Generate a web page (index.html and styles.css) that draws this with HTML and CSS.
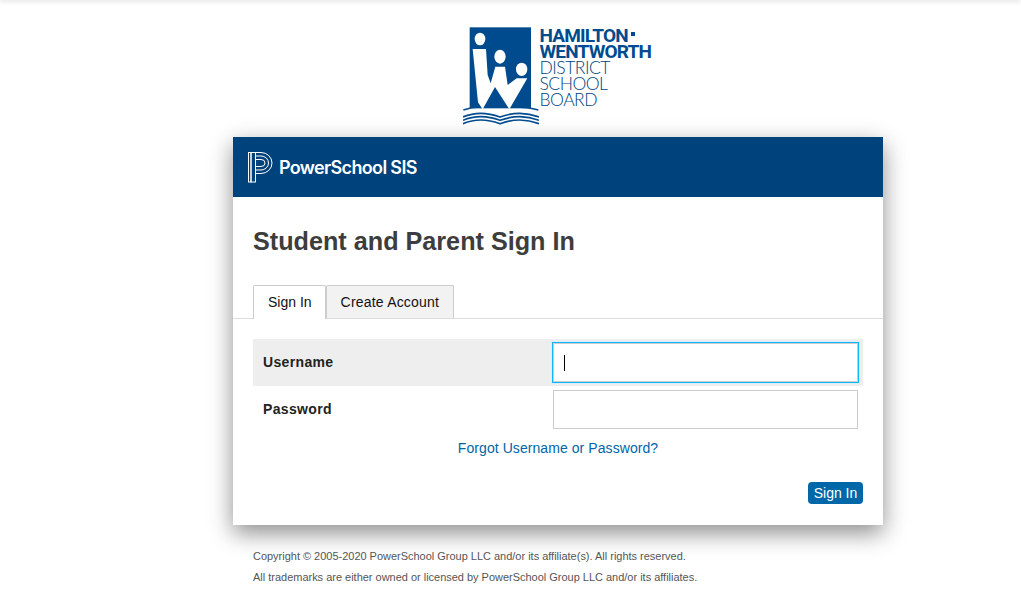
FILE: index.html
```html
<!DOCTYPE html>
<html lang="en">
<head>
    <meta charset="UTF-8">
    <meta name="viewport" content="width=device-width, initial-scale=1.0">
    <title>Student and Parent Sign In</title>
    <link rel="stylesheet" href="styles.css">
</head>
<body>
    <div class="top-edge"></div>

    <div class="page">
        <div class="board-logo">
            <svg class="board-mark" width="76" height="100" viewBox="39 36 228 300">
                <rect x="59" y="37" width="184" height="243" fill="#004b8d"/>
                <ellipse cx="90" cy="72" rx="16" ry="19" fill="#fff"/>
                <ellipse cx="150" cy="125" rx="17" ry="21" fill="#fff"/>
                <ellipse cx="215" cy="163" rx="17" ry="20" fill="#fff"/>
                <path d="M68 102 H108 L113 180 L122 205 L136 155 H165 L173 210 L200 190 H232 L178 283 L135 216 L98 283 L84 262 Z" fill="#fff"/>
                <g fill="none" stroke="#004b8d">
                    <path stroke-width="4" d="M40 285 Q65 276 90 276"/>
                    <path stroke-width="4" d="M190 276 Q235 276 265 285"/>
                    <path stroke-width="5" d="M39 306 Q90 284 150 306 Q210 284 267 306"/>
                    <path stroke-width="5" d="M39 316 Q90 294 150 316 Q210 294 267 316"/>
                    <path stroke-width="5" d="M39 326 Q90 304 150 326 Q210 304 267 326"/>
                </g>
            </svg>
            <div class="board-name">
                <div class="board-strong">HAMILTON<span class="board-dot"></span></div>
                <div class="board-strong">WENTWORTH</div>
                <div class="board-light">DISTRICT</div>
                <div class="board-light">SCHOOL</div>
                <div class="board-light">BOARD</div>
            </div>
        </div>

        <div class="card">
            <div class="card-header">
                <svg class="ps-mark" width="25" height="31" viewBox="0 0 25 31" fill="none" stroke="#fff" stroke-width="1">
                    <rect x="0.5" y="0.5" width="2.5" height="29.5"/>
                    <rect x="3" y="0.5" width="4.5" height="29.5"/>
                    <path d="M7.5 0.5 H13 A11 10.5 0 0 1 13 21.5 H7.5"/>
                    <path d="M7.5 4 H13 A7.5 7 0 0 1 13 18 H7.5"/>
                    <path d="M7.5 7.5 H13 A4 3.5 0 0 1 13 14.5 H7.5"/>
                </svg>
                <span class="ps-name">PowerSchool SIS</span>
            </div>

            <h1>Student and Parent Sign In</h1>

            <div class="tabs">
                <a class="tab tab-active">Sign In</a>
                <a class="tab">Create Account</a>
            </div>

            <form class="signin-form" action="#" method="post">
                <div class="form-row row-shaded">
                    <label for="username">Username</label>
                    <div class="input-wrap">
                        <input type="text" id="username" class="focused">
                        <span class="caret"></span>
                    </div>
                </div>
                <div class="form-row">
                    <label for="password">Password</label>
                    <div class="input-wrap">
                        <input type="password" id="password">
                    </div>
                </div>
                <p class="forgot"><a href="#">Forgot Username or Password?</a></p>
                <div class="button-row">
                    <button type="button" class="btn-signin">Sign In</button>
                </div>
            </form>
        </div>

        <div class="legal">
            <p>Copyright © 2005-2020 PowerSchool Group LLC and/or its affiliate(s). All rights reserved.</p>
            <p>All trademarks are either owned or licensed by PowerSchool Group LLC and/or its affiliates.</p>
        </div>
    </div>
</body>
</html>
```

FILE: styles.css
```css
html, body {
    margin: 0;
    padding: 0;
    background: #fff;
    font-family: "Liberation Sans", Arial, sans-serif;
}
.top-edge {
    height: 0;
    box-shadow: 0 0 5px 1px rgba(0, 0, 0, 0.2);
}
.page {
    width: 650px;
    margin-left: 233px;
}

/* board logo */
.board-logo {
    display: flex;
    justify-content: center;
    height: 137px;
    padding-top: 27px;
    box-sizing: border-box;
}
.board-mark {
    flex: none;
    margin: 0 1px 0 -1px;
}
.board-name {
    width: 113px;
    padding-top: 1px;
    color: #004b8d;
    line-height: 16px;
}
.board-strong {
    font-family: "Roboto", sans-serif;
    font-weight: 700;
    font-size: 19px;
    letter-spacing: -0.8px;
    white-space: nowrap;
}
.board-dot {
    display: inline-block;
    width: 4px;
    height: 4px;
    margin-left: 3px;
    vertical-align: 6px;
    background: #004b8d;
}
.board-light {
    color: #003f7d;
    font-family: "Lato", sans-serif;
    font-weight: 300;
    font-size: 17.5px;
    letter-spacing: -0.5px;
}

/* card */
.card {
    height: 388px;
    background: #fff;
    box-shadow: 0 8px 22px rgba(0, 0, 0, 0.45);
}
.card-header {
    display: flex;
    align-items: center;
    height: 60px;
    padding-left: 15px;
    background: #00427c;
}
.ps-mark {
    margin-right: 6px;
}
.ps-name {
    color: #fff;
    font-family: "Inter", sans-serif;
    font-weight: 600;
    font-size: 18px;
    letter-spacing: -0.65px;
}
h1 {
    margin: 0;
    padding: 30px 20px 0;
    height: 58px;
    color: #3d3d3d;
    font-size: 25.2px;
    line-height: 28px;
    font-weight: bold;
}

/* tabs */
.tabs {
    display: flex;
    height: 33px;
    padding-left: 20px;
    border-bottom: 1px solid #ddd;
}
.tab {
    height: 33px;
    box-sizing: border-box;
    padding: 0 14px;
    color: #111;
    font-size: 14px;
    letter-spacing: 0.2px;
    line-height: 33px;
    background: #f2f2f2;
    border: 1px solid #ccc;
    border-bottom: 0;
    border-radius: 2px 2px 0 0;
}
.tab-active {
    height: 34px;
    letter-spacing: 0;
    padding-right: 13px;
    background: #fff;
}

/* form */
.signin-form {
    padding: 20px 20px 0;
}
.form-row {
    display: flex;
    align-items: center;
    height: 47px;
    padding-right: 5px;
}
.row-shaded {
    background: #eee;
}
.form-row label {
    flex: 1;
    padding: 0 0 2px 10px;
    color: #222;
    font-size: 14px;
    font-weight: bold;
    letter-spacing: 0.35px;
}
.input-wrap {
    position: relative;
    width: 305px;
}
.input-wrap input {
    display: block;
    width: 100%;
    height: 39px;
    box-sizing: border-box;
    padding: 0 10px;
    background: #fff;
    border: 1px solid #ccc;
    border-radius: 0;
    outline: none;
}
.input-wrap .focused {
    box-shadow: 0 0 0 1px #12b5f8, 0 0 0 2px #d8eef8;
}
.caret {
    position: absolute;
    left: 11px;
    top: 12px;
    width: 1px;
    height: 16px;
    background: #000;
}
.forgot {
    margin: 6px 0 0;
    text-align: center;
    font-size: 14px;
    letter-spacing: 0.07px;
    line-height: 18px;
}
.forgot a {
    color: #0065a8;
    text-decoration: none;
}
.button-row {
    display: flex;
    justify-content: flex-end;
    margin-top: 25px;
}
.btn-signin {
    width: 55px;
    height: 22px;
    padding: 0;
    color: #fff;
    font-family: "Liberation Sans", Arial, sans-serif;
    font-size: 14px;
    background: #0067a8;
    border: 0;
    border-radius: 4px;
}

/* legal text */
.legal {
    padding: 21px 20px 0;
    color: #555;
    font-size: 10.97px;
}
.legal p {
    margin: 0;
    line-height: 21px;
}
```
